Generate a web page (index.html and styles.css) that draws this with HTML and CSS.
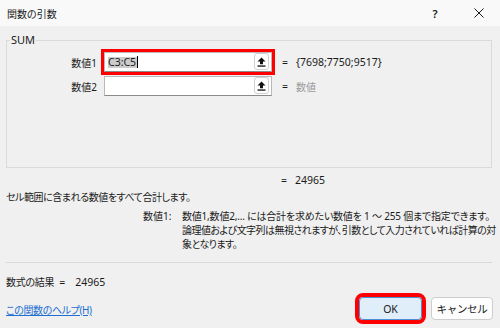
FILE: index.html
```html
<!DOCTYPE html>
<html lang="ja">
<head>
<meta charset="utf-8">
<title>関数の引数</title>
<link rel="stylesheet" href="styles.css">
</head>
<body>
<div class="dialog">
  <div class="titlebar">
    <span class="title">関数の引数</span>
    <span class="help">?</span>
    <span class="close">
      <svg width="10" height="10" viewBox="0 0 10 10"><path d="M0.5 0.5 L9.5 9.5 M9.5 0.5 L0.5 9.5" stroke="#1a1a1a" stroke-width="1" fill="none"/></svg>
    </span>
  </div>
  <div class="content">
    <fieldset class="group">
      <legend>SUM</legend>
      <div class="arg-row">
        <span class="arg-label">数値1</span>
        <div class="field active">
          <span class="field-text"><span class="sel">C3:C5</span><span class="caret"></span></span>
          <span class="pick"><svg width="9" height="10" viewBox="0 0 9 10"><path d="M4.5 0.5 L8.5 4.5 H6 V7.2 H3 V4.5 H0.5 Z" fill="#111"/><rect x="0.5" y="8.4" width="8" height="1.3" fill="#111"/></svg></span>
        </div>
        <span class="eq">=</span>
        <span class="val">{7698;7750;9517}</span>
      </div>
      <div class="arg-row">
        <span class="arg-label">数値2</span>
        <div class="field">
          <span class="field-text"></span>
          <span class="pick"><svg width="9" height="10" viewBox="0 0 9 10"><path d="M4.5 0.5 L8.5 4.5 H6 V7.2 H3 V4.5 H0.5 Z" fill="#111"/><rect x="0.5" y="8.4" width="8" height="1.3" fill="#111"/></svg></span>
        </div>
        <span class="eq">=</span>
        <span class="val muted">数値</span>
      </div>
    </fieldset>
    <div class="arg-row total">
      <span class="arg-label"></span>
      <span class="spacer"></span>
      <span class="eq">=</span>
      <span class="val">24965</span>
    </div>
    <p class="summary">セル範囲に含まれる数値をすべて合計します。</p>
    <div class="detail">
      <span class="detail-label">数値1:</span>
      <span class="detail-text"><span class="line1">数値1,数値2,... には合計を求めたい数値を 1 ～ 255 個まで指定できます。</span><br>論理値および文字列は無視されますが、引数として入力されていれば計算の対<br>象となります。</span>
    </div>
    <hr class="sep">
    <div class="result">
      <span class="ja">数式の結果</span>
      <span class="result-eq">=</span>
      <span class="result-val">24965</span>
    </div>
  </div>
  <div class="footer">
    <a class="help-link" href="#">この関数のヘルプ(H)</a>
    <div class="buttons">
      <button class="btn primary">OK</button>
      <button class="btn ja">キャンセル</button>
    </div>
  </div>
</div>
</body>
</html>
```
FILE: styles.css
```css
* { box-sizing: border-box; }
html, body {
  margin: 0;
  padding: 0;
}
body {
  width: 500px;
  height: 328px;
  overflow: hidden;
  background: #f0f0f0;
  color: #1a1a1a;
  font-family: "Noto Sans", "Noto Sans CJK JP", sans-serif;
  font-size: 10.5px;
  font-feature-settings: "palt";
}
.dialog {
  width: 500px;
  height: 328px;
  display: flex;
  flex-direction: column;
}
.titlebar {
  height: 26px;
  flex: none;
  background: #f9f9f9;
  display: flex;
  align-items: center;
  padding-left: 7px;
}
.title { flex: 1; font-size: 10px; }
.help {
  width: 46px;
  text-align: center;
  font-size: 11px;
  font-weight: 600;
}
.close {
  width: 42px;
  height: 26px;
  display: flex;
  align-items: center;
  justify-content: center;
}
.content {
  padding: 0 8px 0 6px;
}
.group {
  margin: 7px 0 0;
  padding: 3px 0 69px;
  border: 1px solid #dadada;
  min-width: 0;
}
.group legend {
  margin-left: 3px;
  padding: 0 1px;
  line-height: 14px;
  font-size: 11px;
}
.arg-row {
  display: grid;
  grid-template-columns: 97px 168px 23px 1fr;
  align-items: center;
  height: 24px;
}
.arg-label {
  text-align: right;
  padding-right: 7px;
  font-size: 10px;
}
.field {
  height: 20px;
  background: #fff;
  border: 1px solid #b9b9b9;
  border-bottom-color: #8a8a8a;
  display: flex;
  align-items: flex-start;
  padding: 0 2px 0 3px;
}
.field.active {
  outline: 3px solid #f00;
}
.field-text {
  flex: 1;
  height: 18px;
  display: flex;
  align-items: center;
  font-size: 10.5px;
}
.sel {
  background: #cccccc;
  line-height: 11px;
  padding: 0 1px 0 0;
}
.caret {
  width: 1px;
  height: 12px;
  background: #000;
}
.pick {
  width: 15px;
  height: 17px;
  border: 1px solid #d0d0d0;
  border-radius: 3px;
  background: #fff;
  display: flex;
  align-items: center;
  justify-content: center;
}
.eq {
  text-align: center;
  padding-left: 3px;
}
.val { padding-left: 1px; }
.muted { color: #9b9b9b; font-size: 10px; }
.total {
  margin-top: 4px;
  height: 16px;
}
.summary {
  margin: 2px 0 0;
  line-height: 14px;
  font-size: 10px;
  letter-spacing: -0.45px;
}
.detail {
  display: grid;
  grid-template-columns: 39px 1fr;
  padding-left: 137px;
  margin-top: 5px;
  line-height: 14px;
  font-size: 10px;
}
.detail-text {
  white-space: nowrap;
  letter-spacing: -0.55px;
}
.line1 { letter-spacing: -0.2px; }
.sep {
  margin: 11px 0 0;
  border: 0;
  border-top: 1px solid #d9d9d9;
  height: 0;
}
.result {
  margin-top: 12px;
  line-height: 14px;
  display: flex;
}
.ja { font-size: 10px; letter-spacing: -0.3px; }
.result-eq { margin-left: 5px; }
.result-val { margin-left: 10px; }
.footer {
  margin-top: auto;
  height: 31px;
  display: flex;
  align-items: flex-start;
  justify-content: space-between;
  padding: 0 7px 0 6px;
}
.help-link {
  color: #1c6fd1;
  text-decoration: underline;
  margin-top: 6px;
  line-height: 14px;
  font-size: 10px;
  letter-spacing: -0.4px;
}
.buttons {
  display: flex;
  gap: 9px;
}
.btn {
  width: 62px;
  height: 23px;
  border: 1px solid #cdcdcd;
  border-radius: 4px;
  background: #fdfdfd;
  font-family: inherit;
  font-size: 10.5px;
  color: #1a1a1a;
  padding: 0;
}
.btn.primary {
  width: 63px;
  background: #e0eefa;
  border-color: #4b8fd6;
  outline: 4px solid #f00;
  outline-offset: 0;
}
```
